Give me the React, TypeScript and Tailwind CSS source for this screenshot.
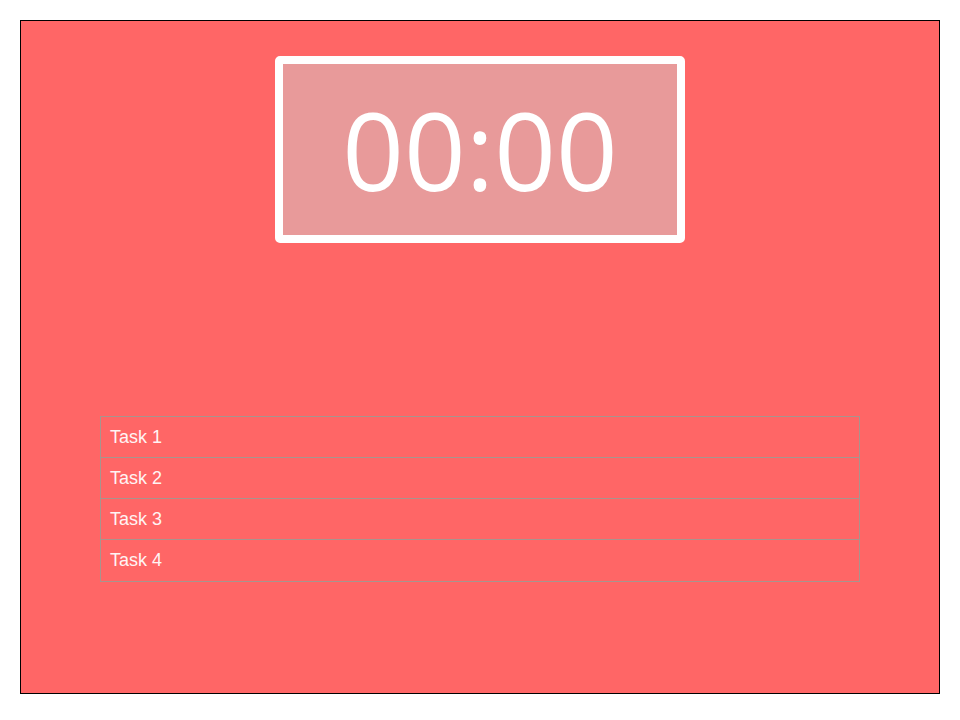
import React from 'react';

const TASKS = ['Task 1', 'Task 2', 'Task 3', 'Task 4'];

export default function App() {
  return (
    <div className="w-[960px] h-[720px] bg-white pt-5 px-5">
      <div className="h-[674px] border border-black bg-[#ff6666] flex flex-col items-center pt-[35px]">
        <div className="w-[410px] h-[187px] border-[8px] border-white rounded-[5px] bg-[#e89a9a] flex items-center justify-center">
          <span className="text-white text-[108px] leading-none font-['Open_Sans','Noto_Sans',sans-serif]">
            00:00
          </span>
        </div>

        <ul className="w-[760px] mt-[173px] border border-[#a8948e] font-['Liberation_Sans',Arial,sans-serif]">
          {TASKS.map((task, i) => (
            <li
              key={i}
              className={
                i < TASKS.length - 1
                  ? 'px-[9px] h-[41px] flex items-center text-[18px] text-[#fff4f4] border-b border-[#a8948e]'
                  : 'px-[9px] h-[41px] flex items-center text-[18px] text-[#fff4f4]'
              }
            >
              {task}
            </li>
          ))}
        </ul>
      </div>
    </div>
  );
}
